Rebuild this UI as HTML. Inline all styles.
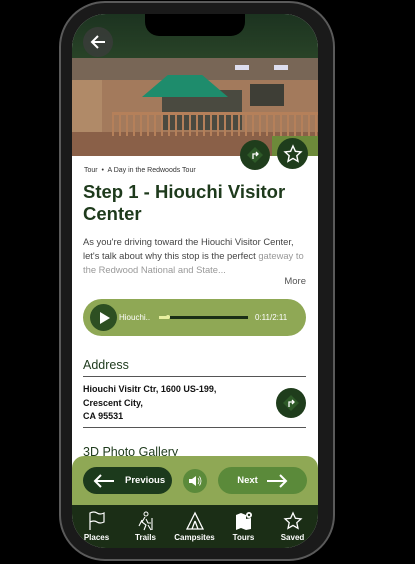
<!DOCTYPE html><html><head><style>
*{margin:0;padding:0;box-sizing:border-box}
body{width:415px;height:564px;background:#000;position:relative;overflow:hidden;font-family:"Liberation Sans",sans-serif}
.phone{position:absolute;left:59px;top:1px;width:276px;height:560px;border-radius:46px;background:#1a1a1a;border:2px solid #5a5a5a}
.screen{position:absolute;left:72px;top:14px;width:246px;height:534px;border-radius:34px;overflow:hidden;background:#fff}
.abs{position:absolute}
.notch{position:absolute;left:145px;top:14px;width:100px;height:22px;background:#000;border-radius:0 0 14px 14px}
.circ{position:absolute;border-radius:50%;display:flex;align-items:center;justify-content:center}
</style></head><body>
<div class="phone"></div>
<div class="screen">
 <!-- photo -->
 <div class="abs" style="left:0;top:0;width:246px;height:142px;background:linear-gradient(#1c3320 0,#2a4528 35%,#4a5e3a 42%)"></div>
 <div class="abs" style="left:0;top:44px;width:246px;height:24px;background:#786656;clip-path:polygon(0 0,100% 0,100% 100%,0 100%)"></div>
 <div class="abs" style="left:163px;top:51px;width:14px;height:5px;background:#dde"></div>
 <div class="abs" style="left:202px;top:51px;width:14px;height:5px;background:#dde"></div>
 <div class="abs" style="left:0;top:66px;width:246px;height:76px;background:#a37a5c"></div>
 <div class="abs" style="left:0;top:66px;width:30px;height:76px;background:#b08a68"></div>
 <div class="abs" style="left:178px;top:70px;width:34px;height:22px;background:#3e3e36"></div>
 <div class="abs" style="left:90px;top:76px;width:80px;height:40px;background:#4a4a40"></div>
 <div class="abs" style="left:70px;top:61px;width:86px;height:22px;background:#1e8c6c;clip-path:polygon(30% 0,70% 0,100% 100%,0 100%)"></div>
 <div class="abs" style="left:0;top:118px;width:246px;height:24px;background:#8a6048"></div>
 <div class="abs" style="left:40px;top:98px;width:206px;height:24px;background:repeating-linear-gradient(90deg,#b5805a 0 2px,transparent 2px 7px);border-top:3px solid #b5805a"></div>
 <div class="abs" style="left:200px;top:122px;width:46px;height:20px;background:#6d8a3a"></div>
 <div class="circ" style="left:11px;top:13px;width:30px;height:30px;background:rgba(60,60,60,.75)"><svg width="18" height="18" viewBox="0 0 18 18"><path d="M16 9H3M9 3L3 9l6 6" stroke="#fff" stroke-width="2" fill="none"/></svg></div>
 <div class="circ" style="left:168px;top:126px;width:30px;height:30px;background:#1f3d1c"><svg width="20" height="20" viewBox="0 0 20 20"><path d="M10 2l8 8-8 8-8-8z" fill="#2e5a28"/><path d="M8 14V9h5M11 7l2 2-2 2" stroke="#fff" stroke-width="1.3" fill="none"/></svg></div>
 <div class="circ" style="left:205px;top:124px;width:31px;height:31px;background:#1f3d1c"><svg width="20" height="20" viewBox="0 0 20 20"><path d="M10 2l2.4 5.3 5.6.6-4.2 3.8 1.2 5.6L10 14.4 5 17.3l1.2-5.6L2 7.9l5.6-.6z" stroke="#fff" stroke-width="1.4" fill="none"/></svg></div>
 <div class="abs" style="left:12px;top:153px;font-size:7px;color:#333">Tour &nbsp;•&nbsp; A Day in the Redwoods Tour</div>
 <div class="abs" style="left:11px;top:167px;font-size:18.5px;font-weight:bold;color:#1e3a1c;line-height:22px;width:230px">Step 1 - Hiouchi Visitor Center</div>
 <div class="abs" style="left:11px;top:221px;font-size:9.4px;color:#444;line-height:14px;width:222px">As you're driving toward the Hiouchi Visitor Center, let's talk about why this stop is the perfect <span style="color:#999">gateway to the Redwood National and State...</span></div>
 <div class="abs" style="right:12px;top:262px;font-size:9.5px;color:#555">More</div>
 <div class="abs" style="left:11px;top:285px;width:223px;height:37px;border-radius:19px;background:#8fa855"></div>
 <div class="circ" style="left:18px;top:290px;width:27px;height:27px;background:#2d4f22"><svg width="14" height="14" viewBox="0 0 14 14"><path d="M3 1l10 6-10 6z" fill="#fff"/></svg></div>
 <div class="abs" style="left:47px;top:299px;font-size:8px;color:#fff">Hiouchi..</div>
 <div class="abs" style="left:87px;top:302px;width:10px;height:3px;background:#e8f0a0"></div>
 <div class="abs" style="left:94px;top:301px;width:4px;height:4px;background:#e8f0a0;border-radius:50%"></div>
 <div class="abs" style="left:98px;top:302px;width:78px;height:3px;background:#1a2e16"></div>
 <div class="abs" style="left:183px;top:299px;font-size:8px;color:#fff">0:11/2:11</div>
 <div class="abs" style="left:11px;top:344px;font-size:12.5px;color:#1e3a1c">Address</div>
 <div class="abs" style="left:11px;top:362px;width:223px;height:1px;background:#555"></div>
 <div class="abs" style="left:11px;top:369px;font-size:9px;font-weight:bold;color:#111;line-height:13.5px">Hiouchi Visitr Ctr, 1600 US-199,<br>Crescent City,<br>CA 95531</div>
 <div class="circ" style="left:204px;top:374px;width:30px;height:30px;background:#1f3d1c"><svg width="20" height="20" viewBox="0 0 20 20"><path d="M10 2l8 8-8 8-8-8z" fill="#2e5a28"/><path d="M8 14V9h5M11 7l2 2-2 2" stroke="#fff" stroke-width="1.3" fill="none"/></svg></div>
 <div class="abs" style="left:11px;top:413px;width:223px;height:1px;background:#555"></div>
 <div class="abs" style="left:11px;top:431px;font-size:12.5px;color:#1e3a1c">3D Photo Gallery</div>
 <div class="abs" style="left:0;top:442px;width:246px;height:52px;background:#8fa855;border-radius:12px 12px 0 0"></div>
 <div class="abs" style="left:11px;top:453px;width:89px;height:27px;border-radius:14px;background:#1c3a1c;color:#fff;font-size:9.5px;font-weight:bold;display:flex;align-items:center"><svg style="margin:0 10px 0 10px" width="22" height="14" viewBox="0 0 22 14"><path d="M21 7H2M8 1L2 7l6 6" stroke="#fff" stroke-width="2" fill="none"/></svg>Previous</div>
 <div class="circ" style="left:111px;top:455px;width:24px;height:24px;background:#5b8a3a"><svg width="14" height="14" viewBox="0 0 14 14"><path d="M1 5h3l4-3v10L4 9H1z" fill="#fff"/><path d="M10 4q2 3 0 6M11.5 2.5q3 4.5 0 9" stroke="#fff" stroke-width=".8" fill="none"/></svg></div>
 <div class="abs" style="left:146px;top:453px;width:89px;height:27px;border-radius:14px;background:#5b8a3a;color:#fff;font-size:9.5px;font-weight:bold;display:flex;align-items:center;justify-content:center">Next<svg style="margin-left:8px" width="22" height="14" viewBox="0 0 22 14"><path d="M1 7h19M14 1l6 6-6 6" stroke="#fff" stroke-width="2" fill="none"/></svg></div>
 <div class="abs" style="left:0;top:491px;width:246px;height:43px;background:#1b2e16"></div>
 <div class="abs" style="left:0;top:497px;width:246px;display:flex;color:#fff;font-size:8px;font-weight:bold;text-align:center">
  <div style="width:49px"><svg width="20" height="20" viewBox="0 0 20 20"><path d="M3 19V2q4-2 7 0t7 0v9q-4 2-7 0t-7 0" stroke="#fff" stroke-width="1.2" fill="none"/></svg><div>Places</div></div>
  <div style="width:49px"><svg width="20" height="20" viewBox="0 0 20 20"><circle cx="10" cy="3" r="2" stroke="#fff" fill="none"/><path d="M9 6l-3 5 4 3-2 5M10 8l2 4 3 0M12 14l3 5M16 7v12M6 9l-3 6" stroke="#fff" stroke-width="1.1" fill="none"/></svg><div>Trails</div></div>
  <div style="width:49px"><svg width="20" height="20" viewBox="0 0 20 20"><path d="M10 2L2 18h16zM10 10l-3 8M10 10l3 8" stroke="#fff" stroke-width="1.3" fill="none"/></svg><div>Campsites</div></div>
  <div style="width:49px"><svg width="20" height="20" viewBox="0 0 20 20"><path d="M2 4l5-2 5 2v15l-5-2-5 2zM12 8l5-1v11l-5 1z" fill="#fff"/><circle cx="15" cy="4" r="3" fill="#fff"/><circle cx="15" cy="4" r="1.2" fill="#1b2e16"/></svg><div>Tours</div></div>
  <div style="width:49px"><svg width="20" height="20" viewBox="0 0 20 20"><path d="M10 2l2.4 5.3 5.6.6-4.2 3.8 1.2 5.6L10 14.4 5 17.3l1.2-5.6L2 7.9l5.6-.6z" stroke="#fff" stroke-width="1.3" fill="none"/></svg><div>Saved</div></div>
 </div>
</div>
<div class="notch"></div>
</body></html>
